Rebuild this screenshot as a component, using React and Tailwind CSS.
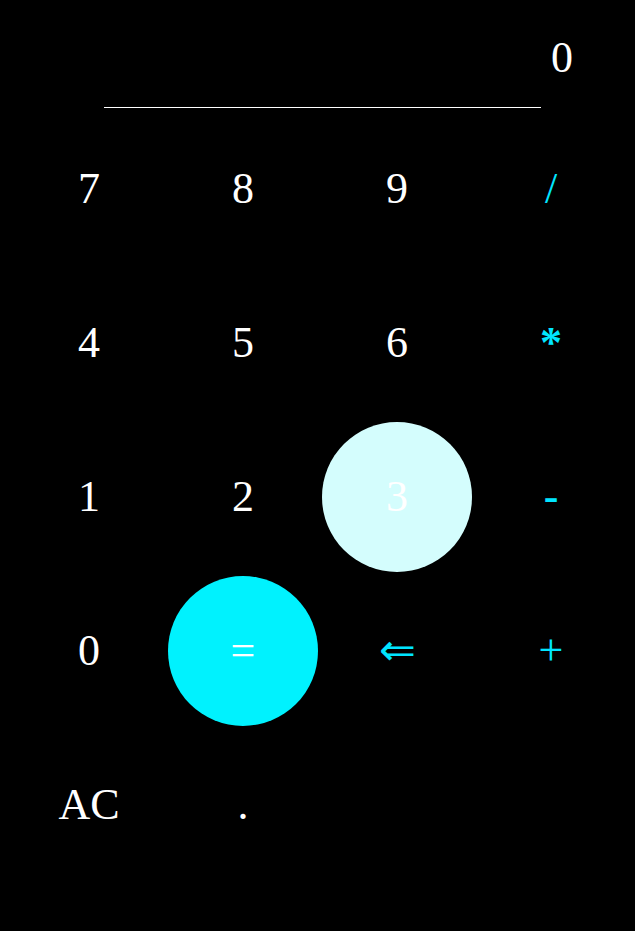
import React, { useState } from 'react'

const keys = [
  { label: '7' }, { label: '8' }, { label: '9' }, { label: '/', op: true },
  { label: '4' }, { label: '5' }, { label: '6' }, { label: '*', op: true, bold: true },
  { label: '1' }, { label: '2' }, { label: '3', active: true }, { label: '-', op: true, bold: true },
  { label: '0' }, { label: '=', equals: true }, { label: '⇐', op: true }, { label: '+', op: true },
  { label: 'AC' }, { label: '.' },
]

const App = () => {
  const [display] = useState('0')

  const keyClass = (k) => {
    const weight = k.bold ? 'font-bold ' : ''
    if (k.equals) return 'bg-[#00f2fe] text-white rounded-full'
    if (k.active) return 'bg-[#d4fdfd] text-white rounded-full'
    if (k.op) return weight + 'text-[#00e5ff]'
    return 'text-white'
  }

  return (
    <div className="min-h-screen bg-black font-['Liberation_Serif',serif]">
      {/* Display */}
      <div className="h-[107px] pt-[34px] pr-[62px] text-right text-white text-[44px] leading-[48px]">
        {display}
      </div>
      <div className="ml-[104px] w-[437px] h-px bg-white"></div>

      {/* Keypad */}
      <div className="mt-[6px] pl-[14px] grid grid-cols-[repeat(4,150px)] auto-rows-[150px] gap-[4px]">
        {keys.map((k, i) => (
          <button
            key={i}
            className={`flex items-center justify-center text-[44px] leading-[48px] ${keyClass(k)}`}
          >
            {k.label}
          </button>
        ))}
      </div>
    </div>
  )
}

export default App
